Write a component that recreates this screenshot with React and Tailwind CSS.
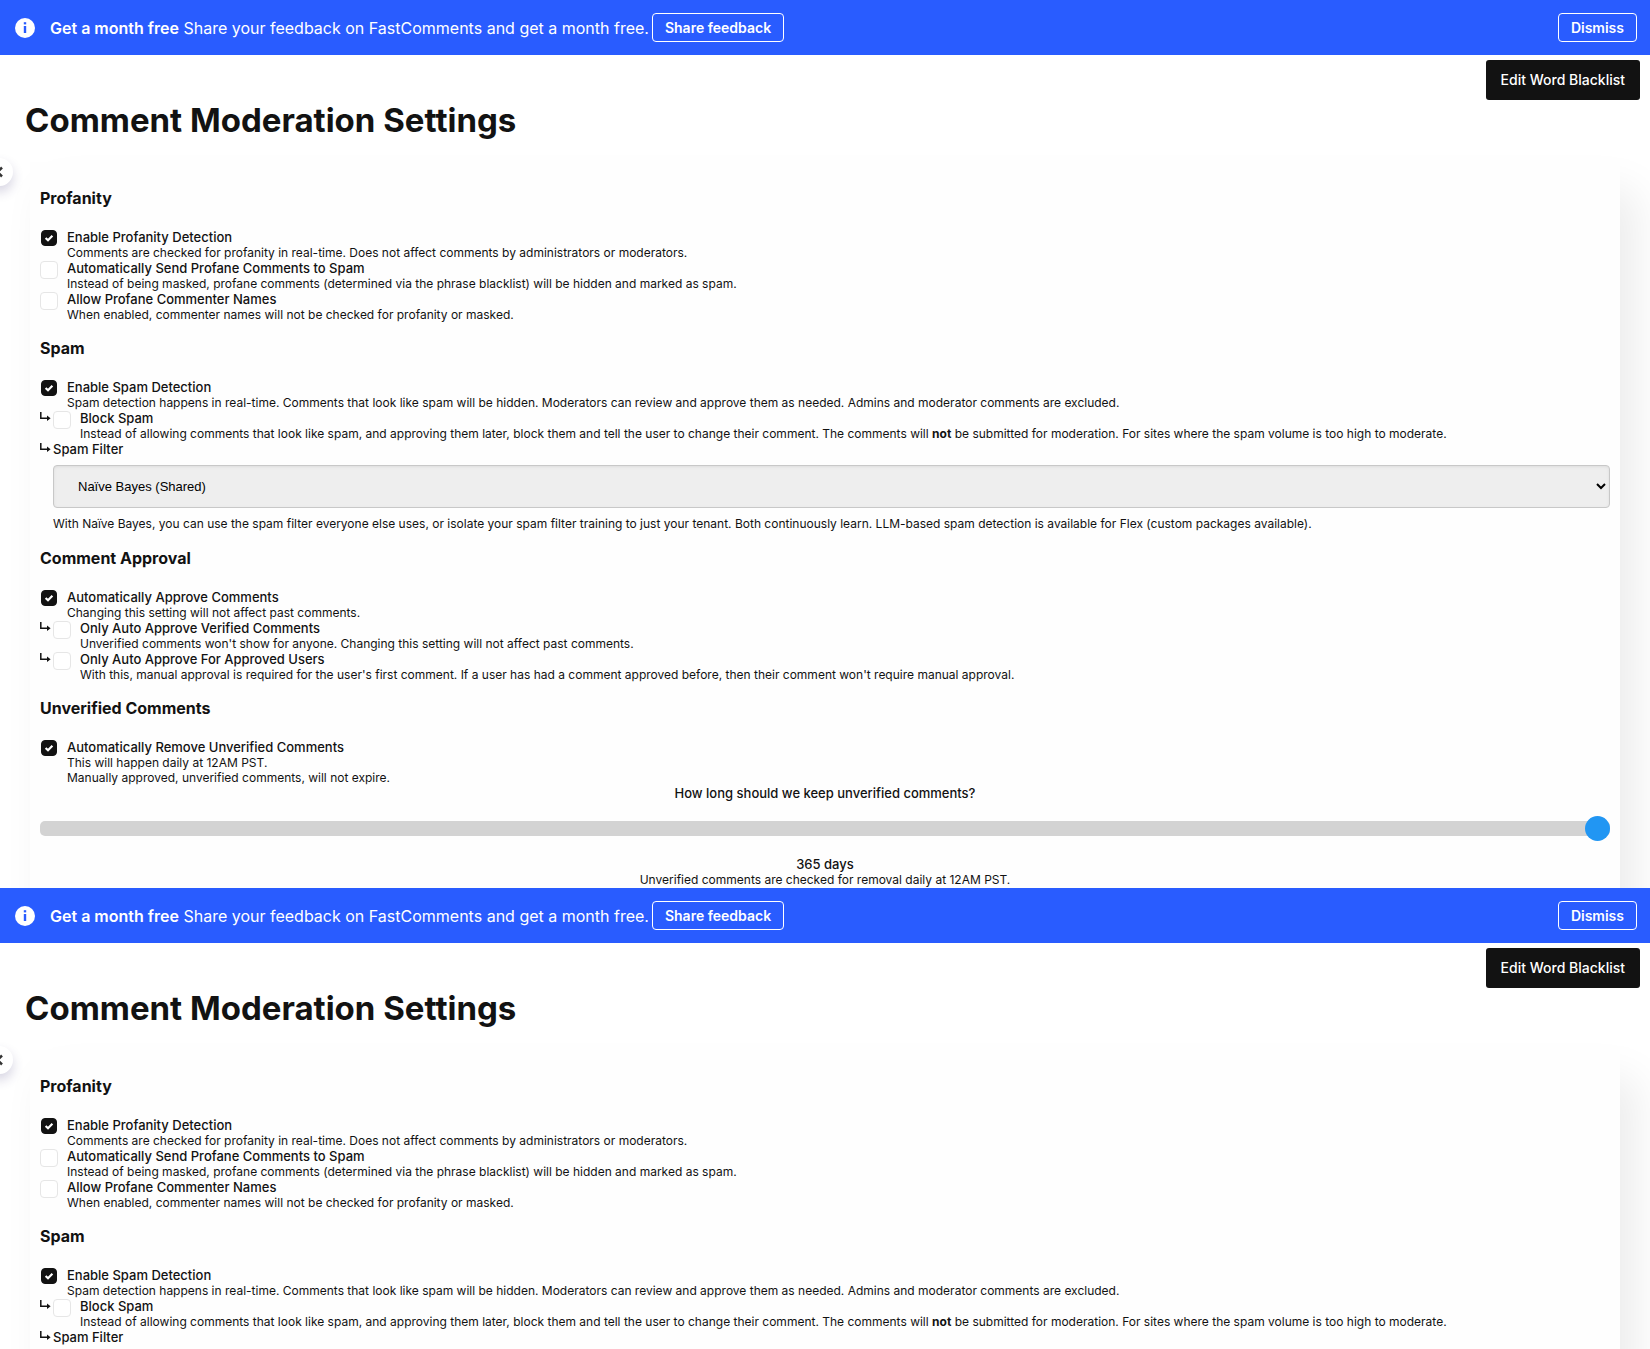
import React, { useId, useState } from 'react'

const Banner = () => (
  <div className="flex h-[55px] items-center bg-[#295cff] pr-[13px] pl-[15px] text-white">
    <svg className="mr-[15px] shrink-0" width="20" height="20" viewBox="0 0 20 20" aria-hidden="true">
      <circle cx="10" cy="10" r="10" fill="#fff" />
      <rect x="8.8" y="8" width="2.4" height="7" fill="#295cff" />
      <rect x="8.8" y="4.2" width="2.4" height="2.2" fill="#295cff" />
    </svg>
    <p className="text-base">
      <b className="font-semibold">Get a month free</b> Share your feedback on FastComments and get a month free.
    </p>
    <button className="ml-[3px] h-[29px] rounded border border-white px-3 text-sm font-semibold">Share feedback</button>
    <button className="ml-auto h-[29px] rounded border border-white px-3 text-sm font-semibold">Dismiss</button>
  </div>
)

const SubArrow = () => (
  <svg className="w-[13px] shrink-0" height="16" viewBox="0 0 13 16" fill="none" stroke="#121212" aria-hidden="true">
    <path d="M0.8 2V8.2H9" strokeWidth="1.5" />
    <path d="M7 5.4L10.6 8.2L7 11Z" fill="#121212" stroke="none" />
  </svg>
)

const Option = ({ title, nested, defaultChecked = false, children }) => {
  const id = useId()
  const [checked, setChecked] = useState(defaultChecked)

  return (
    <div className="flex items-start">
      {nested && <SubArrow />}
      <span className="relative flex h-[31px] w-[27px] shrink-0">
        <input
          id={id}
          type="checkbox"
          checked={checked}
          onChange={(e) => setChecked(e.target.checked)}
          className="mt-px h-[18px] w-[18px] appearance-none rounded border border-[#e6e6e6] bg-white checked:m-px checked:h-4 checked:w-4 checked:border-[#121212] checked:bg-[#121212]"
        />
        {checked && (
          <svg className="pointer-events-none absolute top-px left-px" width="16" height="16" viewBox="0 0 16 16" fill="none" aria-hidden="true">
            <path d="M4.6 8L7 10.2L11.4 5.8" stroke="#fff" strokeWidth="2.2" />
          </svg>
        )}
      </span>
      <div>
        <label htmlFor={id} className="block text-[13px] leading-4 font-medium">{title}</label>
        <div className="text-xs leading-[15px]">{children}</div>
      </div>
    </div>
  )
}

const Section = ({ title, children }) => (
  <section className="pt-[17px]">
    <h2 className="mb-[21px] text-base leading-[19px] font-bold">{title}</h2>
    {children}
  </section>
)

const RetentionSlider = () => {
  const id = useId()
  const [days, setDays] = useState(365)

  return (
    <div className="text-center text-[13px] leading-4 font-medium">
      <label htmlFor={id} className="block">How long should we keep unverified comments?</label>
      <input
        id={id}
        type="range"
        min="1"
        max="365"
        value={days}
        onChange={(e) => setDays(Number(e.target.value))}
        className="my-5 block h-[15px] w-full appearance-none rounded-[5px] bg-[#d3d3d3] [&::-webkit-slider-thumb]:h-[25px] [&::-webkit-slider-thumb]:w-[25px] [&::-webkit-slider-thumb]:appearance-none [&::-webkit-slider-thumb]:rounded-full [&::-webkit-slider-thumb]:bg-[#2196f3]"
      />
      <div>{days} days</div>
      <div className="text-xs leading-[15px] font-normal">Unverified comments are checked for removal daily at 12AM PST.</div>
    </div>
  )
}

const SettingsPage = () => {
  const filterId = useId()

  return (
    <div className="relative h-[888px] overflow-hidden bg-white text-[#121212]">
      <Banner />
      <div className="flex justify-end px-[10px] pt-[5px]">
        <button className="h-10 rounded-[3px] bg-[#121212] px-[15px] text-sm font-medium text-white">Edit Word Blacklist</button>
      </div>
      <h1 className="px-[25px] text-[33px] leading-[41px] font-bold">Comment Moderation Settings</h1>
      <button
        aria-label="Collapse menu"
        className="absolute top-[158px] left-[-15px] z-10 flex h-7 w-7 items-center justify-center rounded-full bg-white shadow-[0_6px_12px_rgba(50,40,110,0.2)]"
      >
        <svg width="8" height="12" viewBox="0 0 8 12" fill="none" stroke="#333" strokeWidth="2.5" aria-hidden="true">
          <path d="M7 1.5L2.5 6L7 10.5" />
        </svg>
      </button>

      <main className="mx-[30px] mt-[21px] bg-[#fefefe] px-[10px] pt-[10px] pb-10 shadow-[16px_28px_40px_rgba(0,0,0,0.08)]">
        <Section title="Profanity">
          <Option title="Enable Profanity Detection" defaultChecked>
            Comments are checked for profanity in real-time. Does not affect comments by administrators or moderators.
          </Option>
          <Option title="Automatically Send Profane Comments to Spam">
            Instead of being masked, profane comments (determined via the phrase blacklist) will be hidden and marked as spam.
          </Option>
          <Option title="Allow Profane Commenter Names">
            When enabled, commenter names will not be checked for profanity or masked.
          </Option>
        </Section>

        <Section title="Spam">
          <Option title="Enable Spam Detection" defaultChecked>
            Spam detection happens in real-time. Comments that look like spam will be hidden. Moderators can review and approve them as needed. Admins and moderator comments are excluded.
          </Option>
          <Option title="Block Spam" nested>
            Instead of allowing comments that look like spam, and approving them later, block them and tell the user to change their comment. The comments will <b>not</b> be submitted for moderation. For sites where the spam volume is too high to moderate.
          </Option>
          <div className="flex pb-px">
            <SubArrow />
            <div className="min-w-0 flex-1">
              <label htmlFor={filterId} className="block text-[13px] leading-4 font-medium">Spam Filter</label>
              <select
                id={filterId}
                className="my-2 block h-[43px] w-full rounded border border-[#c8c8c8] bg-[#eee] pl-5 font-['Liberation_Sans',sans-serif] text-[13px] text-black shadow-[inset_0_1px_3px_#ddd]"
              >
                <option>Naïve Bayes (Shared)</option>
                <option>Naïve Bayes (Isolated)</option>
              </select>
              <div className="text-xs leading-[15px]">
                With Naïve Bayes, you can use the spam filter everyone else uses, or isolate your spam filter training to just your tenant. Both continuously learn. LLM-based spam detection is available for Flex (custom packages available).
              </div>
            </div>
          </div>
        </Section>

        <Section title="Comment Approval">
          <Option title="Automatically Approve Comments" defaultChecked>
            Changing this setting will not affect past comments.
          </Option>
          <Option title="Only Auto Approve Verified Comments" nested>
            Unverified comments won't show for anyone. Changing this setting will not affect past comments.
          </Option>
          <Option title="Only Auto Approve For Approved Users" nested>
            With this, manual approval is required for the user's first comment. If a user has had a comment approved before, then their comment won't require manual approval.
          </Option>
        </Section>

        <Section title="Unverified Comments">
          <Option title="Automatically Remove Unverified Comments" defaultChecked>
            This will happen daily at 12AM PST.
            <br />
            Manually approved, unverified comments, will not expire.
          </Option>
          <RetentionSlider />
        </Section>
      </main>
    </div>
  )
}

const App = () => (
  <div className="h-screen overflow-hidden bg-white font-[Inter,sans-serif]">
    <SettingsPage />
    <SettingsPage />
  </div>
)

export default App
